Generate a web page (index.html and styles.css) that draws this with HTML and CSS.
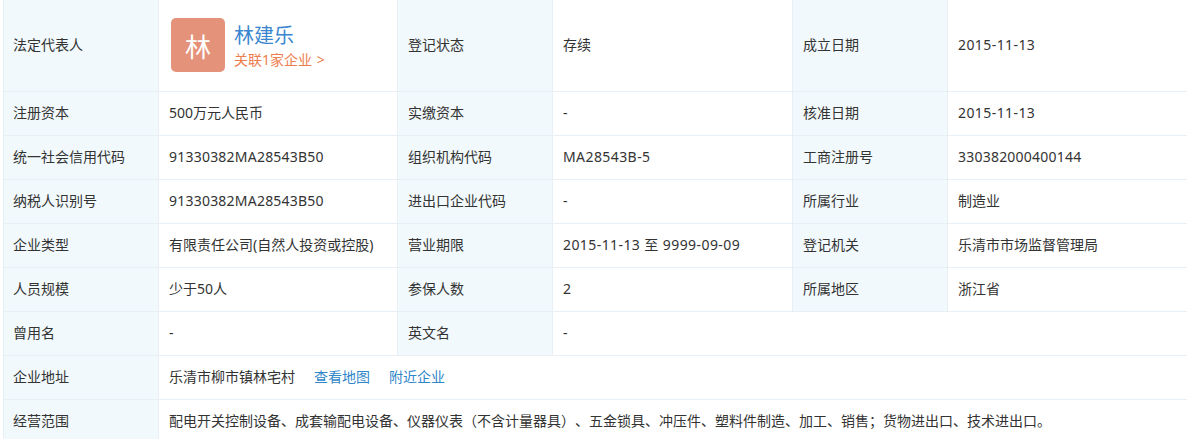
FILE: index.html
```html
<!DOCTYPE html>
<html lang="zh">
<head>
<meta charset="utf-8">
<title>企业信息</title>
<link rel="stylesheet" href="styles.css">
</head>
<body>
<table class="info">
<colgroup>
<col class="c-label"><col class="c-val1"><col class="c-label"><col class="c-val2"><col class="c-label"><col class="c-val3">
</colgroup>
<tr class="row-first">
<td class="tb">法定代表人</td>
<td class="person-cell"><div class="person"><div class="avatar">林</div><div class="person-info"><a class="name">林建乐</a><a class="related">关联1家企业 <span class="chev">&gt;</span></a></div></div></td>
<td class="tb">登记状态</td><td>存续</td>
<td class="tb">成立日期</td><td class="wide">2015-11-13</td>
</tr>
<tr>
<td class="tb">注册资本</td><td>500万元人民币</td>
<td class="tb">实缴资本</td><td>-</td>
<td class="tb">核准日期</td><td class="wide">2015-11-13</td>
</tr>
<tr>
<td class="tb">统一社会信用代码</td><td class="num">91330382MA28543B50</td>
<td class="tb">组织机构代码</td><td class="wide">MA28543B-5</td>
<td class="tb">工商注册号</td><td class="num">330382000400144</td>
</tr>
<tr>
<td class="tb">纳税人识别号</td><td class="num">91330382MA28543B50</td>
<td class="tb">进出口企业代码</td><td>-</td>
<td class="tb">所属行业</td><td>制造业</td>
</tr>
<tr>
<td class="tb">企业类型</td><td>有限责任公司(自然人投资或控股)</td>
<td class="tb">营业期限</td><td class="wide">2015-11-13 至 9999-09-09</td>
<td class="tb">登记机关</td><td>乐清市市场监督管理局</td>
</tr>
<tr>
<td class="tb">人员规模</td><td>少于50人</td>
<td class="tb">参保人数</td><td>2</td>
<td class="tb">所属地区</td><td>浙江省</td>
</tr>
<tr>
<td class="tb">曾用名</td><td>-</td>
<td class="tb">英文名</td><td colspan="3">-</td>
</tr>
<tr>
<td class="tb">企业地址</td><td colspan="5">乐清市柳市镇林宅村<a class="link first-link">查看地图</a><a class="link">附近企业</a></td>
</tr>
<tr>
<td class="tb">经营范围</td><td colspan="5">配电开关控制设备、成套输配电设备、仪器仪表（不含计量器具）、五金锁具、冲压件、塑料件制造、加工、销售；货物进出口、技术进出口。</td>
</tr>
</table>
</body>
</html>
```

FILE: styles.css
```css
html, body {
  margin: 0;
  padding: 0;
  background: #fff;
  overflow: hidden;
}
body {
  height: 439px;
  font-family: "Noto Sans", "Noto Sans CJK SC", sans-serif;
  font-size: 14px;
  color: #333;
  text-spacing-trim: space-all;
}
.info {
  border-collapse: collapse;
  table-layout: fixed;
  width: 1198px;
  margin: -1px 0 0 3px;
}
.c-label { width: 155px; }
.c-val1 { width: 239px; }
.c-val2 { width: 240px; }
.c-val3 { width: 254px; }
.info td {
  height: 42px;
  padding: 0 10px 1px;
  border: 1px solid #e9f0f5;
  line-height: 20px;
  box-sizing: content-box;
}
.info .tb { background: #f2f9fc; }
.info td:first-child { padding-left: 9px; }
.info .row-first td { height: 89px; padding-bottom: 2px; }
.info .num { letter-spacing: 0.22px; }
.info .wide { letter-spacing: 0.42px; }
.person { display: flex; align-items: center; gap: 9px; padding: 1px 0 0 2px; }
.avatar {
  width: 54px;
  height: 54px;
  box-sizing: border-box;
  padding-top: 4px;
  border-radius: 5px;
  background: #e4937a;
  color: #fff;
  font-size: 26px;
  display: flex;
  align-items: center;
  justify-content: center;
}
.person-info { display: flex; flex-direction: column; margin-top: 2px; }
.name { color: #3a86cf; font-size: 20px; line-height: 28px; }
.related { color: #ee7d4d; font-size: 14px; line-height: 20px; }
.chev { margin-left: 1px; }
.link { color: #2f86c9; margin-left: 19px; }
.first-link { margin-left: 19px; }
```
